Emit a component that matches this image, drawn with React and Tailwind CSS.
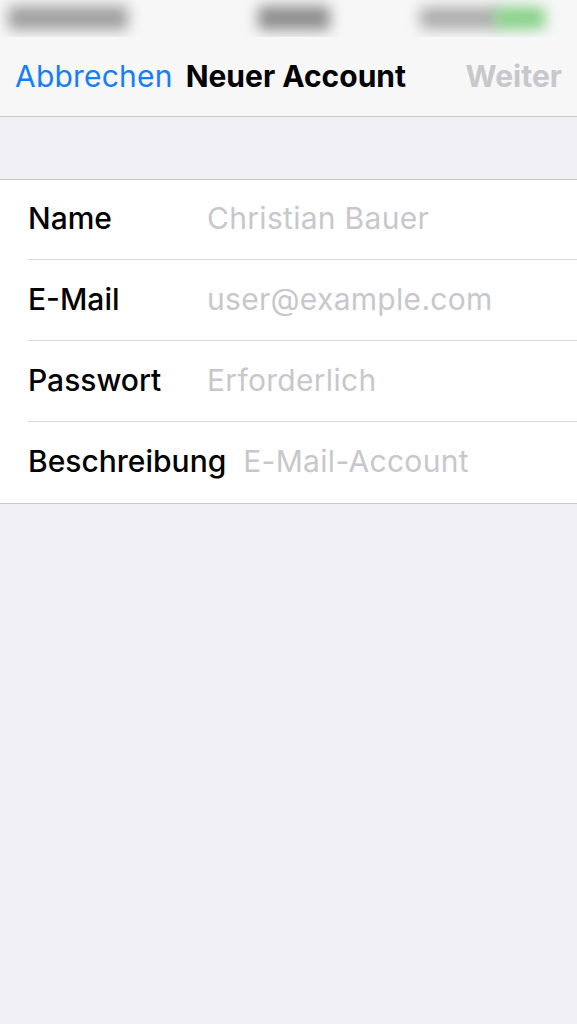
export default function App() {
  const rows = [
    ["Name", "Christian Bauer"],
    ["E-Mail", "user@example.com"],
    ["Passwort", "Erforderlich"],
    ["Beschreibung", "E-Mail-Account"],
  ];
  return (
    <div className="w-[577px] h-[1024px] bg-[#efeff4] overflow-hidden" style={{ fontFamily: "Inter, 'Noto Sans', sans-serif" }}>
      <div className="bg-[#f7f7f8] border-b border-[#c8c7cc]">
        <div className="h-[37px] relative overflow-hidden">
          <div className="absolute left-[8px] top-[6px] w-[120px] h-[24px] bg-[#a0a0a0] blur-[7px] rounded"></div>
          <div className="absolute left-[258px] top-[6px] w-[72px] h-[24px] bg-[#8e8e8e] blur-[7px] rounded"></div>
          <div className="absolute left-[420px] top-[7px] w-[80px] h-[22px] bg-[#acacac] blur-[7px] rounded"></div>
          <div className="absolute left-[495px] top-[7px] w-[50px] h-[22px] bg-[#86d086] blur-[7px] rounded"></div>
        </div>
        <div className="h-[79px] flex items-center pb-[1px] px-[15px] text-[30px]">
          <span className="text-[#157efb] tracking-[0.2px]">Abbrechen</span>
          <span className="ml-[13px] font-bold text-black">Neuer Account</span>
          <span className="ml-auto font-bold text-[#c7c7cc]">Weiter</span>
        </div>
      </div>
      <div className="h-[62px]"></div>
      <div className="bg-white border-y border-[#c8c7cc]">
        {rows.map(([label, value], i) => (
          <div key={label} className="pl-[28px]">
            <div className={`${i === 0 ? "h-[80px]" : "h-[81px]"} flex items-center pb-[2px] text-[30px] ${i < rows.length - 1 ? "border-b border-[#d9d9de]" : ""}`}>
              <span className="min-w-[162px] mr-[17px] text-black font-medium">{label}</span>
              <span className="text-[#c7c7cd] tracking-[0.3px]">{value}</span>
            </div>
          </div>
        ))}
      </div>
    </div>
  );
}
